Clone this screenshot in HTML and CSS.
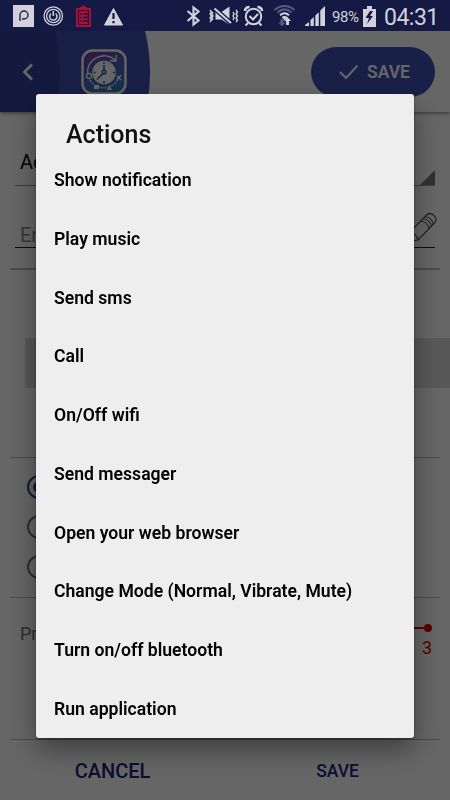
FILE: index.html
```html
<!DOCTYPE html>
<html lang="en">
<head>
  <meta charset="UTF-8" />
  <title>Actions</title>
  <link rel="stylesheet" href="styles.css">
</head>
<body>
  <div class="statusbar">
    <svg class="status-icons" width="330" height="31" viewBox="0 0 330 31">
      <!-- app notifications -->
      <path fill="#d0d1dc" d="M13 5h21v22H13z"/>
      <path fill="none" stroke="#20254b" stroke-width="1.4" d="M20 21v-6a4 4 0 1 1 4 4h-2"/>
      <g fill="none" stroke="#d0d1dc">
        <circle cx="53.300" cy="16" r="9.200" stroke-width="1.300"/>
        <circle cx="53.300" cy="16" r="6.700" stroke-width="1.300"/>
        <path stroke-width="1.500" d="M51 13.500a3.700 3.700 0 1 0 4.600 0M53.300 11v5"/>
      </g>
      <path fill="#b00e35" d="M76 8h4V7h2c0-2 3-2 3 0h2v1h4v19H76z"/>
      <path fill="none" stroke="#141a44" stroke-width="1.200" d="M78.500 10.500h10v14h-10z"/>
      <path stroke="#141a44" stroke-width="1.300" d="M80 14h1.500M83 14h5M80 17.500h1.500M83 17.500h5M80 21h1.500M83 21h5"/>
      <path fill="#d0d1dc" stroke="#d0d1dc" stroke-linejoin="round" d="M113.500 8.500l9 16.500h-18z"/>
      <path stroke="#141a44" stroke-width="2.200" d="M113.500 13v6M113.500 21v2.200"/>
      <!-- bluetooth -->
      <path fill="none" stroke="#d0d1dc" stroke-width="2.200" d="M187.500 11l11 9.500-5 4V7.500l5 4-11 9.500"/>
      <!-- muted, vibrating -->
      <g fill="none" stroke="#d0d1dc" stroke-width="1.400">
        <path d="M210 10l1.500 2-1.500 2 1.500 2-1.500 2 1.500 2-1.500 2M213 12l-1 2 1 2-1 2 1 2M233 12l1 2-1 2 1 2-1 2M236 10l1.500 2-1.500 2 1.500 2-1.500 2 1.500 2-1.500 2"/>
        <path fill="#d0d1dc" stroke="none" d="M215.500 12h6l8-5.500v18l-8-5h-6z"/>
        <path stroke="#141a44" stroke-width="4.500" d="M215 9l16 14"/>
        <path stroke-width="2" d="M214.500 8.500l16.500 14.500"/>
      </g>
      <!-- alarm -->
      <g fill="none" stroke="#d0d1dc" stroke-width="2">
        <circle cx="253.500" cy="16.500" r="7.700"/>
        <path d="M249.500 16l3.500 3.500 5-5.500M248 23l-2.500 2.500M259 23l2.500 2.500"/>
        <path stroke-width="2.600" d="M245 11c0-2.500 2-4 4.500-4M262 11c0-2.500-2-4-4.500-4"/>
      </g>
      <!-- wifi -->
      <g fill="none" stroke-width="2">
        <path stroke="#555a7d" d="M274.500 10c6-5.500 14-5.500 20 0M277.500 12.500c4.500-4 9.500-4 14 0"/>
        <path stroke="#d0d1dc" d="M280 15.200c3-2.700 6-2.700 9 0"/>
        <path fill="#d0d1dc" stroke="none" d="M281.500 17q3-2 6 0l-3 3zM287.500 17l3.500 4h-2v4h-3v-4h-2z"/>
        <path fill="#555a7d" stroke="none" d="M280.500 19h3v3.500h2L282 26.500l-3.500-4h2z"/>
      </g>
      <!-- signal -->
      <path fill="#d0d1dc" d="M305 26v-1l4-3V26zM310.500 26v-6l3.300-3v9zM315.300 26V15.500l3.500-3.200V26zM320.300 26V10.500l4.700-4.500V26z"/>
    </svg>
    <span class="battery-text">98%</span>
    <svg class="battery" width="13" height="21" viewBox="0 0 13 21">
      <path fill="#d0d1dc" d="M0 3h4V0h5v3h4v18H0z"/>
      <path fill="#141a44" d="M7 5L2.500 12H6l-2 6 6-8H7l3-5z"/>
    </svg>
    <span class="clock">04:31</span>
  </div>

  <header class="appbar">
    <div class="logo-circle"></div>
    <div class="back-circle"></div>
    <svg class="back" width="12" height="18" viewBox="0 0 12 18">
      <path fill="none" stroke="#fff" stroke-width="2.800" d="M10 1.500L2.500 9l7.500 7.500"/>
    </svg>
    <svg class="logo" width="46" height="46" viewBox="0 0 46 46">
      <defs>
        <linearGradient id="sky" x1="0.300" y1="0" x2="0.700" y2="1">
          <stop offset="0" stop-color="#7540a8"/>
          <stop offset="0.500" stop-color="#4962b8"/>
          <stop offset="1" stop-color="#3580b5"/>
        </linearGradient>
      </defs>
      <rect x="1.500" y="1.500" width="43" height="43" rx="10" fill="url(#sky)" stroke="#fff" stroke-width="2.400"/>
      <circle cx="23" cy="23.500" r="11.800" fill="#fff"/>
      <g fill="none" stroke="#fff" stroke-width="1.300">
        <path d="M7 25C4 10 24 1 34 11M35 6v6h-6"/>
        <circle cx="8" cy="27" r="2.500"/>
        <path stroke-dasharray="2 1.500" d="M9 31c6 12 26 10 29-4"/>
        <path d="M36 27l4 4M40 26l-4 5"/>
      </g>
      <path fill="#fff" d="M13 36h5v4h-5zM26 41l2.500-5 2.500 5z"/>
      <g fill="none" stroke="#3d4fa5" stroke-width="1.500">
        <circle cx="23" cy="23" r="1.800"/>
        <path d="M23 21v-5M22 24.500l-6 6M23 13.500v1.500M23 32v2M12.500 23.500h2M32 23.500h2"/>
      </g>
    </svg>
    <button class="save-top">
      <svg width="20" height="16" viewBox="0 0 20 16">
        <path fill="none" stroke="#fff" stroke-width="2" d="M1 8l6 6L18.500 1.500"/>
      </svg>
      SAVE
    </button>
  </header>

  <main class="form">
    <div class="spinner">
      <span>Actions</span>
      <svg width="15" height="15" viewBox="0 0 15 15"><path fill="#7b7b7b" d="M15 0v15H0z"/></svg>
    </div>
    <div class="field">
      <span>Enter</span>
      <svg width="28" height="31" viewBox="0 0 28 31">
        <g fill="none" stroke="#585858" stroke-width="1.200">
          <path d="M1 20L17 3.500q4-4 8 0t0 8L9 28l-9 2z"/>
          <path d="M14 6.500q7 1 8.500 8M16 4.500q7 1 8.500 8M12 9q7 1 8 8M1 20q6 1 8 8"/>
        </g>
      </svg>
    </div>
    <div class="band"></div>
    <div class="radios">
      <span class="radio checked"></span>
      <span class="radio"></span>
      <span class="radio"></span>
    </div>
    <div class="priority">
      <span>Priority</span>
      <div class="scale">
        <div class="track"></div>
        <span>3</span>
      </div>
    </div>
    <footer class="buttons">
      <button class="cancel">CANCEL</button>
      <button class="save">SAVE</button>
    </footer>
  </main>

  <div class="overlay">
    <div class="dialog">
      <h1>Actions</h1>
      <ul>
        <li>Show notification</li>
        <li>Play music</li>
        <li>Send sms</li>
        <li>Call</li>
        <li>On/Off wifi</li>
        <li>Send messager</li>
        <li>Open your web browser</li>
        <li>Change Mode (Normal, Vibrate, Mute)</li>
        <li>Turn on/off bluetooth</li>
        <li>Run application</li>
      </ul>
    </div>
  </div>
</body>
</html>
```
FILE: styles.css
```css
* {
  box-sizing: border-box;
}

body {
  margin: 0;
  height: 800px;
  overflow: hidden;
  background-color: #fff;
  font-family: Roboto, sans-serif;
}

button {
  border: none;
  background: none;
  padding: 0;
  font-family: inherit;
}

.statusbar {
  position: relative;
  z-index: 20;
  display: flex;
  align-items: center;
  height: 31px;
  background-color: #141a44;
  color: #d0d1dc;
}

.status-icons {
  flex: none;
}

.battery-text {
  width: 31px;
  margin-left: 2px;
  padding-top: 3px;
  font-size: 15px;
  letter-spacing: -0.4px;
}

.battery {
  margin-top: 1px;
}

.clock {
  margin-left: 8px;
  padding-top: 3px;
  font-size: 23px;
  font-weight: 400;
  letter-spacing: -0.5px;
}

.appbar {
  position: relative;
  display: flex;
  align-items: center;
  height: 81px;
  padding: 0 15px 0 22px;
  box-shadow: 0 1px 4px rgba(0, 0, 0, 0.5);
  clip-path: inset(0 0 -6px 0);
}

/* both circles are cut at the bottom of the bar */
.logo-circle,
.back-circle {
  position: absolute;
  top: 0;
  left: 0;
  height: 81px;
}

.logo-circle {
  width: 150px;
  background: radial-gradient(circle 170px at -20px 41px, #3f51b5 169.500px, transparent 170.500px);
}

.back-circle {
  width: 60px;
  background: radial-gradient(circle 170px at -110px 41px, #303f9f 169.500px, transparent 170.500px);
}

.back,
.logo {
  position: relative;
}

.logo {
  margin-left: 47px;
}

.save-top {
  display: flex;
  align-items: center;
  gap: 8px;
  width: 124px;
  height: 50px;
  margin-left: auto;
  padding-left: 28px;
  border-radius: 25px;
  background-color: #3f51b5;
  color: #fff;
  font-size: 17.5px;
  font-weight: 600;
}

.form {
  height: 688px;
}

.spinner {
  display: flex;
  justify-content: space-between;
  align-items: flex-end;
  height: 74px;
  margin: 0 15px;
  padding-left: 5px;
  border-bottom: 1px solid #999;
  font-size: 20px;
}

.spinner span {
  padding-bottom: 11px;
}

.field {
  display: flex;
  justify-content: space-between;
  align-items: flex-end;
  height: 62px;
  margin: 0 15px;
  padding-left: 5px;
  border-bottom: 1px solid #222;
  color: #888;
  font-size: 20px;
}

.field svg {
  margin: 0 -2px 4px 0;
}

.band {
  height: 190px;
  margin: 20px 10px 0;
  padding: 68px 0 0 15px;
  border-top: 2px solid #bbb;
  border-bottom: 1px solid #bbb;
}

.band::before {
  content: "";
  display: block;
  width: 425px;
  height: 50px;
  background-color: #ddd;
}

.radios {
  display: flex;
  flex-direction: column;
  gap: 16px;
  height: 140px;
  margin: 0 10px;
  padding: 17px 0 0 17px;
  border-bottom: 1px solid #bbb;
}

.radio {
  width: 24px;
  height: 24px;
  padding: 4px;
  border: 2px solid #737373;
  border-radius: 50%;
}

.checked {
  border-color: #303f9f;
}

.checked::before {
  content: "";
  display: block;
  width: 12px;
  height: 12px;
  border-radius: 50%;
  background-color: #303f9f;
}

.priority {
  display: flex;
  justify-content: space-between;
  height: 142px;
  margin: 0 10px;
  padding: 25px 8px 0 10px;
  border-bottom: 1px solid #bbb;
  color: #737373;
  font-size: 18px;
}

.scale {
  width: 260px;
  color: #e00000;
  text-align: right;
}

.scale span {
  display: block;
  margin-top: 4px;
}

.track {
  display: flex;
  align-items: center;
  height: 10px;
}

.track::before {
  content: "";
  flex: 1;
  height: 2px;
  background-color: #e00000;
}

.track::after {
  content: "";
  width: 8px;
  height: 8px;
  border-radius: 50%;
  background-color: #e00000;
}

.buttons {
  display: grid;
  grid-template-columns: 1fr 1fr;
  height: 61px;
}

.buttons button {
  color: #1a237e;
  font-size: 20px;
  font-weight: 500;
}

.buttons .save {
  font-size: 17.5px;
}

.overlay {
  position: fixed;
  inset: 0;
  z-index: 10;
  padding: 94px 36px 0;
  background-color: rgba(0, 0, 0, 0.6);
}

.dialog {
  height: 644px;
  padding: 25px 18px 0;
  border-radius: 3px;
  background-color: #eee;
  box-shadow: 0 1px 2px rgba(0, 0, 0, 0.5), 0 12px 28px rgba(0, 0, 0, 0.4);
}

h1 {
  margin: 0 0 0 12px;
  color: #111;
  font-size: 25px;
  font-weight: 500;
  line-height: 32px;
}

ul {
  margin: 0;
  padding: 0;
  list-style: none;
}

li {
  height: 58.75px;
  color: #000;
  font-size: 17.6px;
  font-weight: 600;
  line-height: 59.5px;
}
```
